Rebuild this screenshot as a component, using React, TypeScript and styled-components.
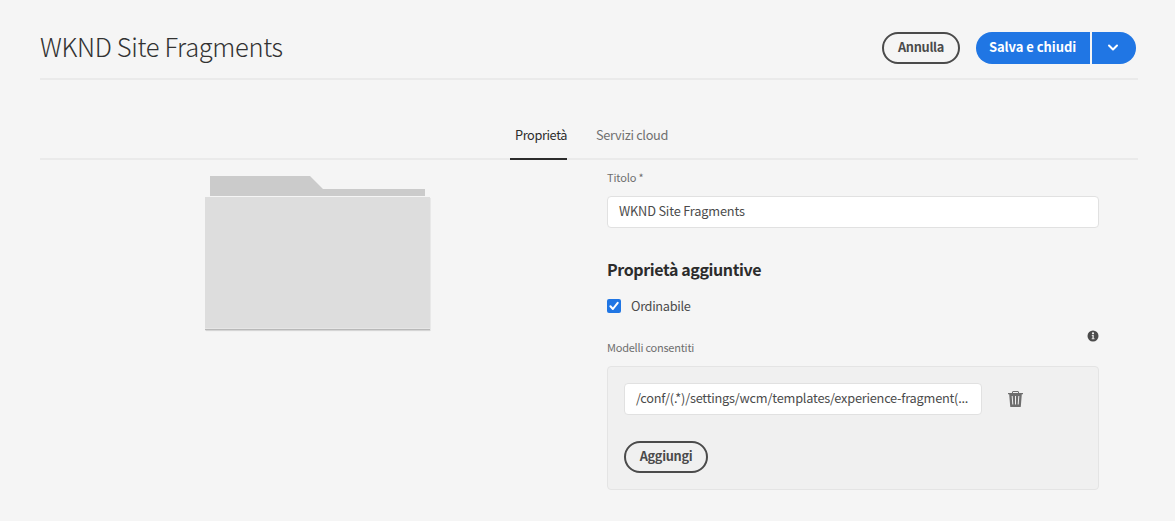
import React from "react";
import styled, { createGlobalStyle } from "styled-components";

const GlobalStyle = createGlobalStyle`
  * { box-sizing: border-box; }
  body {
    margin: 0;
    background: #f5f5f5;
    color: #4b4b4b;
    font-family: "Noto Sans CJK SC", "Noto Sans", sans-serif;
    font-size: 12.75px;
  }
`;

const Page = styled.main`
  width: 1098px;
  height: 521px;
  margin-left: 40px;
`;

const Header = styled.header`
  display: flex;
  align-items: flex-start;
  height: 80px;
  padding: 32px 2px 0 0;
  border-bottom: 2px solid #eaeaea;
`;

const Title = styled.h1`
  flex: 1;
  margin: 0;
  font-size: 25.5px;
  font-weight: 300;
  line-height: 27px;
  color: #323232;
`;

const Text = styled.span<{ $spacing?: number }>`
  white-space: nowrap;
  letter-spacing: ${(p) => p.$spacing ?? 0}px;
`;

const OutlineButton = styled.button<{ $width: number }>`
  width: ${(p) => p.$width}px;
  height: 32px;
  padding: 0 0 2px;
  border: 2px solid #4b4b4b;
  border-radius: 16px;
  background: transparent;
  color: #4b4b4b;
  font: 700 12.75px/26px "Noto Sans CJK SC", "Noto Sans", sans-serif;
  text-align: center;
`;

const SplitButton = styled.div`
  display: flex;
  gap: 2px;
  margin-left: 16px;
`;

const PrimaryButton = styled.button<{ $end?: boolean }>`
  display: flex;
  align-items: center;
  justify-content: center;
  width: ${(p) => (p.$end ? 44 : 114)}px;
  height: 32px;
  padding: ${(p) => (p.$end ? "0 2px 0 0" : "0 1px 2px 0")};
  border: 0;
  border-radius: ${(p) => (p.$end ? "0 16px 16px 0" : "16px 0 0 16px")};
  background: #2076e4;
  color: #fff;
  font: 700 13px/26px "Noto Sans CJK SC", "Noto Sans", sans-serif;
`;

const Tabs = styled.nav`
  display: flex;
  gap: 24px;
  height: 80px;
  padding: 32px 0 0 470px;
  border-bottom: 2px solid #eaeaea;
`;

const Tab = styled.div<{ $active?: boolean }>`
  height: 48px;
  padding: 11px 0 0 5px;
  line-height: 24px;
  width: ${(p) => (p.$active ? 57 : 80)}px;
  color: ${(p) => (p.$active ? "#2c2c2c" : "#707070")};
  border-bottom: ${(p) => (p.$active ? "2px solid #2c2c2c" : "0")};
`;

const Content = styled.section`
  display: flex;
`;

const Preview = styled.div`
  width: 567px;
  padding: 16px 0 0 165px;
`;

const Form = styled.form`
  width: 492px;
`;

const Label = styled.label`
  display: block;
  font-size: 11px;
  line-height: 20px;
  color: #6e6e6e;
`;

const TitleLabel = styled(Label)`
  padding-top: 7px;
`;

const Field = styled.div<{ $width: number }>`
  width: ${(p) => p.$width}px;
  height: 32px;
  padding: 0 11px;
  border: 1px solid #e1e1e1;
  border-radius: 4px;
  background: #fff;
  line-height: 27px;
  color: #4b4b4b;
`;

const TitleField = styled(Field)`
  margin-top: 9px;
`;

const SectionTitle = styled.h2`
  margin: 29px 0 0;
  font-size: 16px;
  font-weight: 700;
  line-height: 24px;
  color: #2c2c2c;
`;

const CheckRow = styled.div`
  display: flex;
  align-items: center;
  gap: 10px;
  height: 24px;
  margin-top: 13px;
`;

const CheckLabel = styled.div`
  height: 24px;
  line-height: 24px;
`;

const Checkbox = styled.span`
  display: flex;
  width: 14px;
  height: 14px;
  border-radius: 2px;
  background: #2076e4;
`;

const LabelRow = styled.div`
  display: flex;
  justify-content: space-between;
  height: 48px;
  padding-top: 12px;
`;

const ModelsLabel = styled(Label)`
  padding-top: 7px;
`;

const Panel = styled.div`
  height: 124px;
  padding: 16px;
  border: 1px solid #e4e4e4;
  border-radius: 4px;
  background: #f0f0f0;
`;

const ItemRow = styled.div`
  display: flex;
  gap: 25px;
  align-items: center;
  margin-bottom: 26px;
`;

const Folder = () => (
  <svg width="228" height="158" viewBox="0 0 228 158" aria-hidden="true">
    <path d="M5 0H105L118 13H220V20H5Z" fill="#cbcbcb" />
    <rect x="1" y="22" width="225" height="132" fill="#e8e8e8" />
    <rect y="21" width="225" height="132" fill="#ddd" />
    <rect y="152" width="225" height="1" fill="#e5e5e5" />
    <rect y="153" width="225" height="1" fill="#b8b8b8" />
    <rect x="0.5" y="154" width="225" height="1" fill="#d5d5d5" />
    <rect x="1" y="155" width="224" height="1" fill="#f1f1f1" />
  </svg>
);

const Chevron = () => (
  <svg width="12" height="8" viewBox="0 0 12 8" fill="none" aria-hidden="true">
    <path d="M2 1.5L6 5.5L10 1.5" stroke="#fff" strokeWidth="2" strokeLinecap="round" strokeLinejoin="round" />
  </svg>
);

const Check = () => (
  <svg width="14" height="14" viewBox="0 0 14 14" fill="none" aria-hidden="true">
    <path d="M3.4 7.3L5.9 10L10.7 3.8" stroke="#fff" strokeWidth="2" strokeLinecap="round" strokeLinejoin="round" />
  </svg>
);

const Info = () => (
  <svg width="12" height="12" viewBox="0 0 12 12" aria-hidden="true">
    <circle cx="6" cy="6" r="5.5" fill="#4b4b4b" />
    <circle cx="6" cy="3.3" r="1.1" fill="#f5f5f5" />
    <path d="M4.8 5H6.8V8.3H7.5V9.2H4.7V8.3H5.4V5.9H4.8Z" fill="#dedede" />
  </svg>
);

const Trash = () => (
  <svg width="17" height="18" viewBox="0 0 17 18" aria-hidden="true">
    <path d="M5.5 3V2Q5.5 1.5 6 1.5H11Q11.5 1.5 11.5 2V3" fill="none" stroke="#6e6e6e" />
    <path d="M1 3H16V4.2H14.8L13.8 16.4Q13.7 17 13.1 17H3.9Q3.3 17 3.2 16.4L2.2 4.2H1Z" fill="#6e6e6e" />
    <path d="M5.2 6L5.8 14.5M8.5 6V14.5M11.8 6L11.2 14.5" stroke="#f0f0f0" strokeWidth="1" />
  </svg>
);

export default function App() {
  return (
    <Page>
      <GlobalStyle />
      <Header>
        <Title><Text $spacing={-0.35}>WKND Site Fragments</Text></Title>
        <OutlineButton $width={78}><Text $spacing={-0.3}>Annulla</Text></OutlineButton>
        <SplitButton>
          <PrimaryButton><Text $spacing={-0.05}>Salva e chiudi</Text></PrimaryButton>
          <PrimaryButton $end aria-label="Altre opzioni"><Chevron /></PrimaryButton>
        </SplitButton>
      </Header>
      <Tabs>
        <Tab $active><Text $spacing={-0.39}>Proprietà</Text></Tab>
        <Tab><Text $spacing={-0.3}>Servizi cloud</Text></Tab>
      </Tabs>
      <Content>
        <Preview><Folder /></Preview>
        <Form>
          <TitleLabel><Text $spacing={-0.15}>Titolo *</Text></TitleLabel>
          <TitleField $width={492}><Text $spacing={-0.17}>WKND Site Fragments</Text></TitleField>
          <SectionTitle><Text $spacing={-0.4}>Proprietà aggiuntive</Text></SectionTitle>
          <CheckRow>
            <Checkbox><Check /></Checkbox>
            <CheckLabel><Text $spacing={-0.33}>Ordinabile</Text></CheckLabel>
          </CheckRow>
          <LabelRow>
            <ModelsLabel><Text $spacing={-0.23}>Modelli consentiti</Text></ModelsLabel>
            <Info />
          </LabelRow>
          <Panel>
            <ItemRow>
              <Field $width={358}><Text $spacing={-0.22}>/conf/(.*)/settings/wcm/templates/experience-fragment(...</Text></Field>
              <Trash />
            </ItemRow>
            <OutlineButton type="button" $width={84}><Text $spacing={-0.3}>Aggiungi</Text></OutlineButton>
          </Panel>
        </Form>
      </Content>
    </Page>
  );
}
